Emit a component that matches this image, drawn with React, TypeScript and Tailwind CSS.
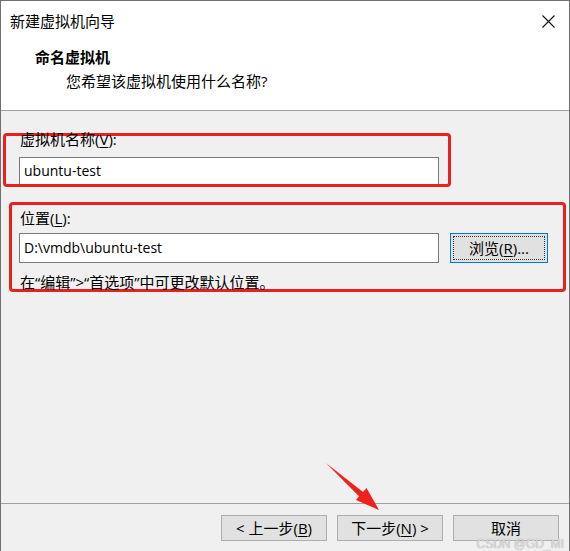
const font = "font-['Open_Sans','Noto_Sans_CJK_SC',sans-serif]";

const Key = ({ k }: { k: string }) => <span className="underline underline-offset-2">{k}</span>;

const WinButton = ({ children }: { children: React.ReactNode }) => (
    <button className="h-[26px] w-[106px] bg-[#e1e1e1] border border-[#adadad] text-[15px] leading-none text-black flex items-center justify-center">
        {children}
    </button>
);

const App = () => {
    return (
        <div className={`relative w-[570px] h-[551px] flex flex-col bg-[#f0f0f0] border border-b-0 border-[#707070] overflow-hidden text-black ${font}`}>
            {/* header */}
            <div className="h-[110px] bg-white border-b border-[#a0a0a0] flex flex-col shrink-0">
                <div className="h-[39px] flex items-center justify-between pl-[9px] pr-[14px]">
                    <span className="text-[15px] leading-5">新建虚拟机向导</span>
                    <svg width="13" height="13" viewBox="0 0 13 13" className="mt-[1px]">
                        <path d="M0.5 0.5 L12.5 12.5 M12.5 0.5 L0.5 12.5" stroke="#111" strokeWidth="1.1" />
                    </svg>
                </div>
                <div className="mt-[7px] pl-[34px] text-[15px] leading-5 font-bold">命名虚拟机</div>
                <div className="mt-[4px] pl-[65px] text-[15px] leading-5">您希望该虚拟机使用什么名称?</div>
            </div>

            {/* body */}
            <div className="flex-1 flex flex-col">
                <div className="mt-[22px] ml-[2px] w-[448px] h-[54px] border-[3px] border-[#e8211f] rounded-[4px] pl-[13px] flex flex-col">
                    <div className="-mt-[7px] h-[20px] text-[15px] leading-5 pl-[1px]">
                        虚拟机名称(<Key k="V" />):
                    </div>
                    <div className="mt-[8px] w-[420px] h-[27px] bg-white border border-[#7a7a7a] border-b-0 flex items-center pl-[4px] pb-[2px] text-[14px]">
                        ubuntu-test
                    </div>
                </div>

                <div className="mt-[15px] ml-[8px] w-[557px] h-[90px] border-[3px] border-[#e8211f] rounded-[4px] pl-[7px] flex flex-col">
                    <div className="mt-[3px] h-[20px] text-[15px] leading-5 pl-[1px]">
                        位置(<Key k="L" />):
                    </div>
                    <div className="mt-[5px] flex items-center gap-[11px]">
                        <div className="w-[420px] h-[30px] bg-white border border-[#7a7a7a] flex items-center pl-[4px] pb-[1px] text-[14px]">
                            D:\vmdb\ubuntu-test
                        </div>
                        <button className="w-[98px] h-[30px] bg-[#e1e1e1] border border-[#0078d7] p-[2px]">
                            <div className="w-full h-full border border-dotted border-[#333] flex items-center justify-center text-[15px] leading-none">
                                浏览(<Key k="R" />)...
                            </div>
                        </button>
                    </div>
                    <div className="mt-[10px] h-[18px] text-[15px] leading-[18px] pl-[1px] whitespace-nowrap">
                        在“编辑”&gt;“首选项”中可更改默认位置。
                    </div>
                </div>
            </div>

            {/* footer */}
            <div className="h-[48px] border-t border-[#a0a0a0] flex justify-end items-start pt-[11px] pr-[10px] shrink-0">
                <WinButton>&lt; 上一步(<Key k="B" />)</WinButton>
                <div className="w-[10px]" />
                <WinButton>下一步(<Key k="N" />) &gt;</WinButton>
                <div className="w-[10px]" />
                <WinButton>取消</WinButton>
            </div>

            {/* annotation arrow */}
            <svg className="absolute left-0 top-0 pointer-events-none" width="570" height="551">
                <polygon
                    points="325,462 362,491 365.5,487 378,509 355,499 358,495.3"
                    fill="#f0201c"
                />
            </svg>

            <span className="absolute right-[5px] top-[535px] text-[12px] leading-4 text-[#dcdcdc] pointer-events-none font-['Liberation_Sans',sans-serif] [text-shadow:0_0_1px_#999]">
                CSDN @GD_MI
            </span>
        </div>
    );
};

export default App;
